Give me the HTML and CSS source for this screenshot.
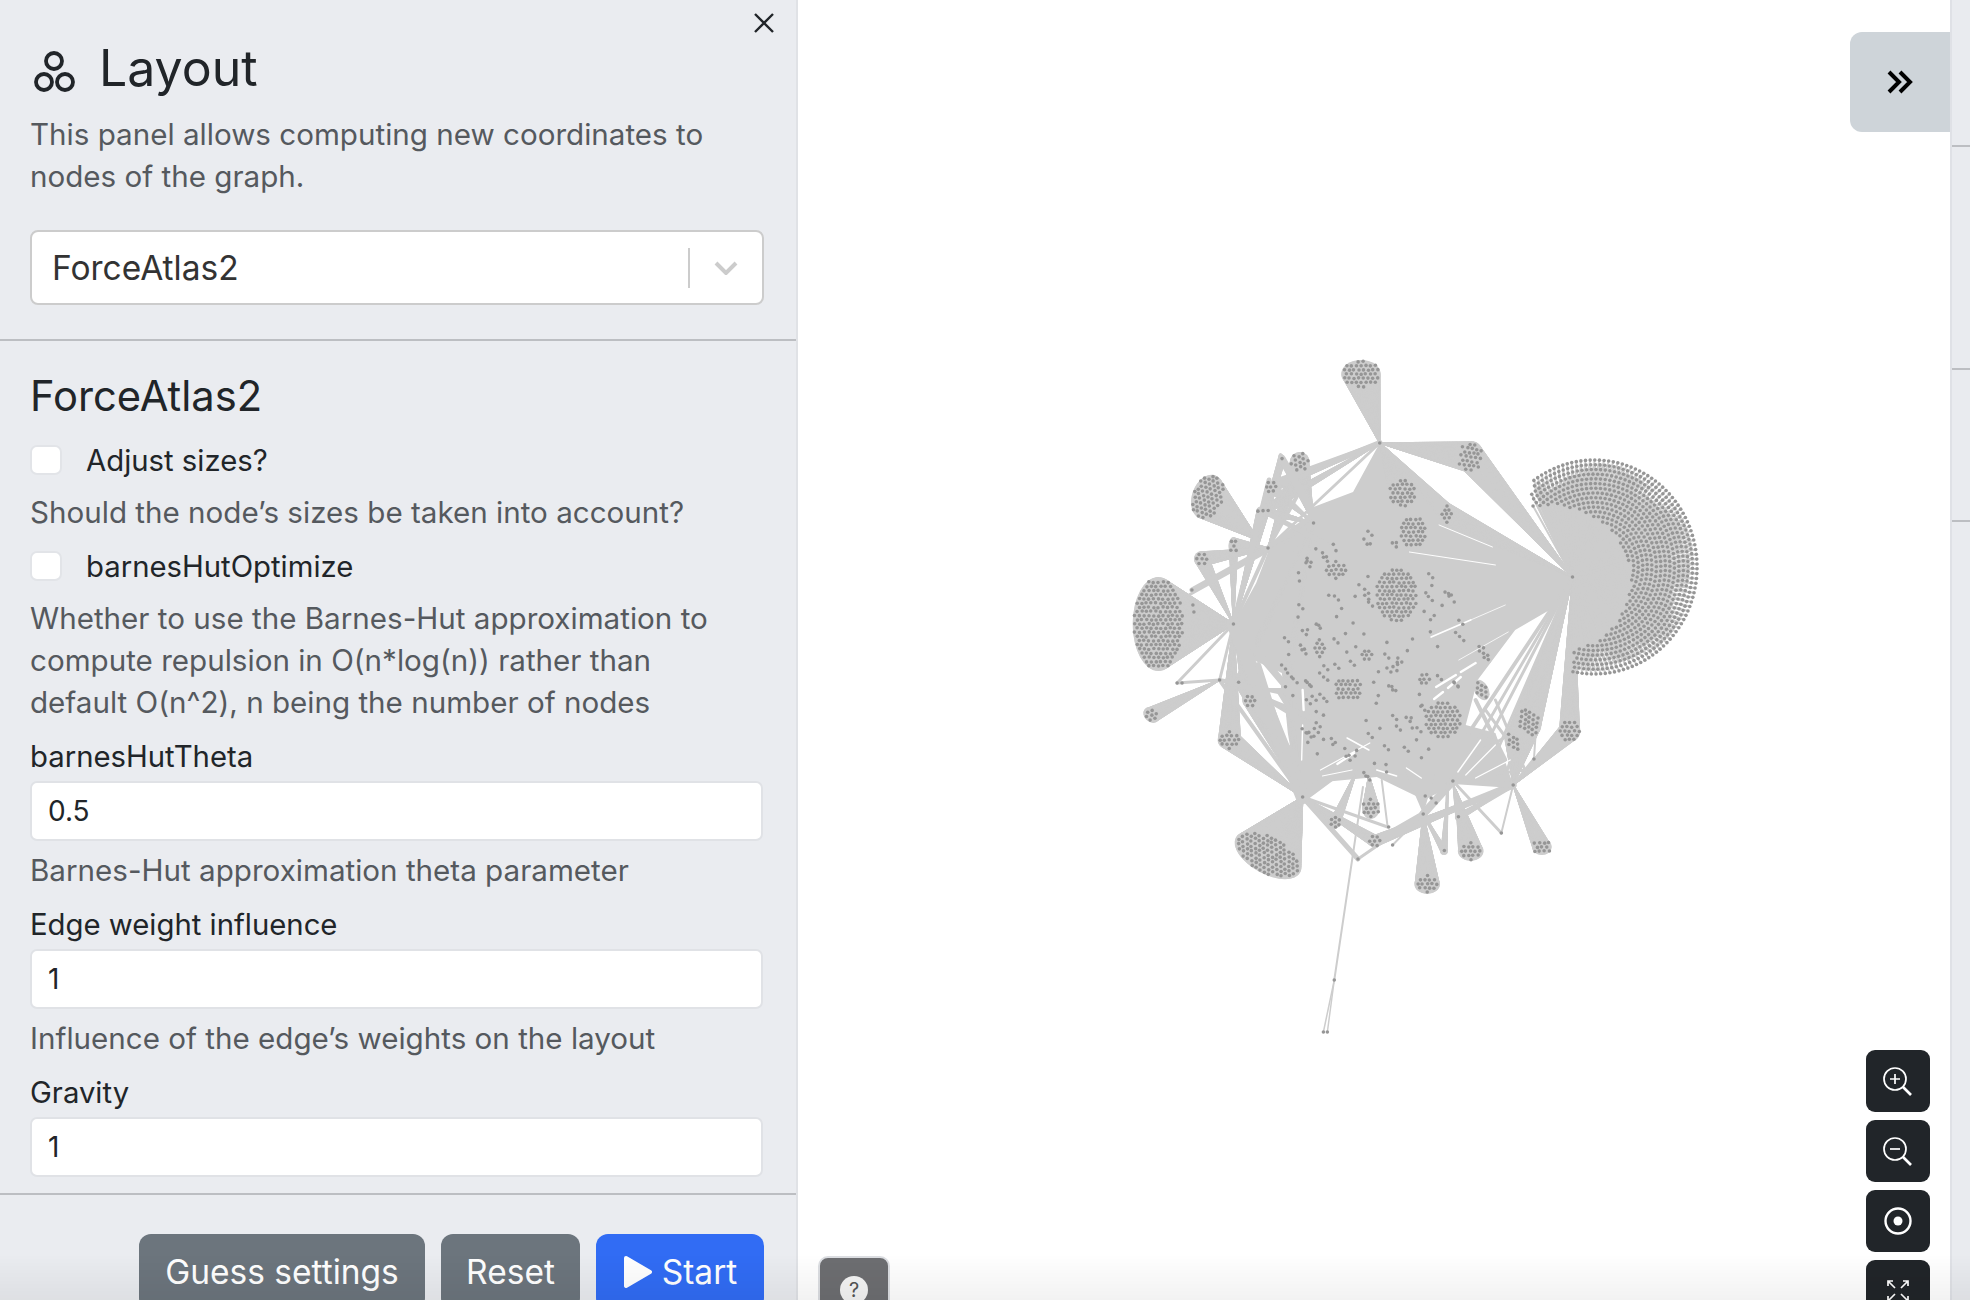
FILE: index.html
```html
<!DOCTYPE html>
<html lang="en">
<head>
  <meta charset="UTF-8" />
  <title>Layout</title>
  <link rel="stylesheet" href="styles.css">
</head>
<body>
  <aside class="panel">
    <button class="close-btn" aria-label="Close">
      <svg width="22" height="20" viewBox="0 0 22 20"><path d="M2 1 20 19M20 1 2 19" /></svg>
    </button>
    <header class="panel-head">
      <h1 class="title">
        <svg class="title-icon" width="42" height="42" viewBox="0 0 42 42">
          <circle cx="21" cy="10" r="8" /><circle cx="11" cy="31" r="8" /><circle cx="32" cy="31" r="8" />
        </svg>
        Layout
      </h1>
      <p class="desc">This panel allows computing new coordinates to nodes of the graph.</p>
      <div class="select">
        <span class="select-value">ForceAtlas2</span>
        <span class="select-sep"></span>
        <svg class="select-arrow" width="24" height="14" viewBox="0 0 24 14"><path d="M2 2 12 12 22 2" /></svg>
      </div>
    </header>

    <section class="panel-body">
      <h2 class="subtitle">ForceAtlas2</h2>

      <label class="check check-first"><span class="check-box"></span>Adjust sizes?</label>
      <p class="desc desc-check">Should the node’s sizes be taken into account?</p>

      <label class="check"><span class="check-box"></span>barnesHutOptimize</label>
      <p class="desc desc-check">Whether to use the Barnes-Hut approximation to compute repulsion in O(n*log(n)) rather than default O(n^2), n being the number of nodes</p>

      <div class="field">
        <label class="field-label">barnesHutTheta</label>
        <div class="input">0.5</div>
        <p class="desc">Barnes-Hut approximation theta parameter</p>
      </div>
      <div class="field">
        <label class="field-label">Edge weight influence</label>
        <div class="input">1</div>
        <p class="desc">Influence of the edge’s weights on the layout</p>
      </div>
      <div class="field">
        <label class="field-label">Gravity</label>
        <div class="input">1</div>
      </div>
    </section>

    <footer class="panel-foot">
      <button class="btn btn-grey btn-guess">Guess settings</button>
      <button class="btn btn-grey btn-reset">Reset</button>
      <button class="btn btn-blue btn-start">
        <svg width="30" height="36" viewBox="0 0 30 36"><path d="M3 4 27 18 3 32Z" /></svg>
        Start
      </button>
    </footer>
  </aside>

  <main class="map" id="map">
    <canvas id="graph"></canvas>

    <button class="expand-btn" aria-label="Expand">
      <svg width="28" height="24" viewBox="0 0 28 24"><path d="M3 2 13 12 3 22M14 2 24 12 14 22" /></svg>
    </button>

    <div class="zoom-controls">
      <button class="zoom-btn" aria-label="Zoom in">
        <svg width="32" height="32" viewBox="0 0 32 32"><circle cx="13" cy="14" r="11" /><path d="M8 14H18M13 9V19" /><path class="handle" d="M21 22 29 30" /></svg>
      </button>
      <button class="zoom-btn" aria-label="Zoom out">
        <svg width="32" height="32" viewBox="0 0 32 32"><circle cx="13" cy="14" r="11" /><path d="M8 14H18" /><path class="handle" d="M21 22 29 30" /></svg>
      </button>
      <button class="zoom-btn" aria-label="Reset zoom">
        <svg width="32" height="32" viewBox="0 0 32 32"><circle class="ring" cx="16" cy="16" r="12.5" /><circle class="dot" cx="16" cy="16" r="4.5" /></svg>
      </button>
      <button class="zoom-btn" aria-label="Fullscreen">
        <svg width="22" height="22" viewBox="0 0 22 22"><path d="M1 1 8 8M1 6V1H6M21 1 14 8M16 1H21V6M1 21 8 14M1 16V21H6M21 21 14 14M16 21H21V16" /></svg>
      </button>
    </div>

    <button class="help-btn" aria-label="Help"><span class="help-mark">?</span></button>
  </main>

  <aside class="side">
    <div class="side-row side-row-1"></div>
    <div class="side-row side-row-2"></div>
    <div class="side-row side-row-3"></div>
  </aside>

  <div class="bottom-shade"></div>

  <script src="graph.js"></script>
</body>
</html>
```

FILE: styles.css
```css
* { box-sizing: border-box; }

html, body {
  margin: 0;
  height: 100%;
  overflow: hidden;
}

body {
  display: flex;
  font-family: Inter, "Noto Sans", sans-serif;
  color: #212529;
  background: #fff;
}

button { font-family: inherit; border: 0; padding: 0; cursor: pointer; }
p { margin: 0; }

/* left panel */
.panel {
  position: relative;
  flex: 0 0 798px;
  height: 100vh;
  display: flex;
  flex-direction: column;
  overflow: hidden;
  background: #eaecf0;
  border-right: 2px solid #e0e2e6;
}

.close-btn {
  position: absolute;
  top: 13px;
  left: 753px;
  width: 22px;
  height: 20px;
  background: none;
}
.close-btn svg { display: block; fill: none; stroke: #212529; stroke-width: 2.4; }

.panel-head {
  flex: 0 0 341px;
  padding: 38px 32px 0 30px;
  border-bottom: 2px solid #bcbec2;
}

.title {
  display: flex;
  align-items: center;
  gap: 24px;
  height: 60px;
  margin: 0 0 15px;
  font-size: 50px;
  font-weight: 400;
}
.title-icon { margin: 8px 0 0 3px; fill: none; stroke: #212529; stroke-width: 3.8; }

.desc {
  max-width: 690px;
  font-size: 29.6px;
  line-height: 42px;
  color: #55595e;
}

.select {
  display: flex;
  align-items: center;
  height: 75px;
  margin-top: 33px;
  padding: 0 24px 0 20px;
  background: #fff;
  border: 2px solid #ccc;
  border-radius: 8px;
}
.select-value { flex: 1; font-size: 33.5px; color: #333; }
.select-sep { width: 2px; height: 40px; background: #ccc; margin-right: 24px; }
.select-arrow { fill: none; stroke: #ccc; stroke-width: 4; }

.panel-body {
  flex: 1;
  min-height: 0;
  padding: 31px 33px 0 30px;
  overflow: hidden;
}

.subtitle {
  margin: 0;
  font-size: 41.7px;
  line-height: 48px;
  font-weight: 400;
}

.check {
  display: flex;
  align-items: center;
  height: 30px;
  margin-top: 18px;
  font-size: 29.3px;
}
.check-first { margin-top: 25px; }
.check-box {
  flex: 0 0 32px;
  height: 30px;
  margin-right: 24px;
  background: #fff;
  border: 2px solid #e2e4e8;
  border-radius: 7px;
}
.desc-check { margin-top: 16px; }

.field { margin-top: 13px; }
.field-label {
  display: block;
  font-size: 29.3px;
  line-height: 42px;
}
.input {
  height: 60px;
  margin: 3px 0 8px;
  padding: 0 16px;
  font-size: 28px;
  line-height: 56px;
  background: #fff;
  border: 2px solid #e0e2e6;
  border-radius: 7px;
}

.panel-foot {
  flex: 0 0 107px;
  min-height: 0;
  display: flex;
  justify-content: flex-end;
  gap: 16px;
  padding: 39px 32px 0 0;
  border-top: 2px solid #bcbec2;
}

.btn {
  flex: none;
  height: 76px;
  font-size: 33.5px;
  color: #fff;
  border-radius: 12px;
}
.btn-grey { background: #6c757d; }
.btn-blue { background: #316cf4; }
.btn-guess { width: 286px; }
.btn-reset { width: 139px; }
.btn-start {
  width: 168px;
  display: flex;
  align-items: center;
  justify-content: center;
  gap: 9px;
}
.btn-start svg { fill: #fff; stroke: #fff; stroke-width: 4; stroke-linejoin: round; }

/* graph area */
.map {
  position: relative;
  flex: 1;
  height: 100vh;
  overflow: hidden;
  background: #fff;
}
#graph { display: block; }

.expand-btn {
  position: absolute;
  top: 32px;
  right: 0;
  width: 100px;
  height: 100px;
  background: #ced4d9;
  border-radius: 12px 0 0 12px;
}
.expand-btn svg { display: block; margin: 0 auto; fill: none; stroke: #000; stroke-width: 4; }

.zoom-controls {
  position: absolute;
  top: 1050px;
  right: 20px;
  display: flex;
  flex-direction: column;
  gap: 8px;
}
.zoom-btn {
  display: flex;
  align-items: center;
  justify-content: center;
  width: 64px;
  height: 62px;
  background: #212529;
  border-radius: 9px;
}
.zoom-btn svg { fill: none; stroke: #fff; stroke-width: 1.7; }
.zoom-btn .handle { stroke-width: 2.6; }
.zoom-btn .ring { stroke-width: 2.4; }
.zoom-btn .dot { fill: #fff; stroke: none; }

.help-btn {
  position: absolute;
  top: 1256px;
  left: 20px;
  display: flex;
  justify-content: center;
  align-items: flex-start;
  width: 72px;
  height: 70px;
  padding-top: 18px;
  background: #6d6e71;
  border: 2px solid #dcdee2;
  border-radius: 10px 10px 0 0;
}
.help-mark {
  width: 28px;
  height: 28px;
  font-size: 20px;
  line-height: 28px;
  color: #555;
  background: #f4f4f4;
  border-radius: 50%;
}

/* right panel, mostly hidden */
.side {
  flex: 0 0 20px;
  height: 100vh;
  background: #e9ebef;
  border-left: 2px solid #dfe1e6;
}
.side-row { border-bottom: 2px solid #bcbec2; }
.side-row-1 { height: 147px; }
.side-row-2 { height: 223px; }
.side-row-3 { height: 152px; }

.bottom-shade {
  position: fixed;
  left: 0;
  right: 0;
  bottom: 0;
  height: 46px;
  background: linear-gradient(rgba(0, 0, 0, 0), rgba(0, 0, 0, 0.05));
  pointer-events: none;
}
```

FILE: graph.js
```js
// draws the network on the canvas. All coordinates are page pixels.
const canvas = document.getElementById("graph");
const map = document.getElementById("map");
canvas.width = map.clientWidth;
canvas.height = map.clientHeight;

const ctx = canvas.getContext("2d");
ctx.translate(-map.offsetLeft, 0);
// the graph is a touch narrower than the coordinates below
ctx.translate(1100, 0);
ctx.scale(0.9885, 1);
ctx.translate(-1100, 0);

const EDGE = "#cdcdcd";
const NODE = "#969696";

let seed = 7;
function rand() {
  seed = (seed * 16807) % 2147483647;
  return (seed - 1) / 2147483646;
}

const A = [1383, 443], B = [1578, 577], C = [1235, 624], D = [1221, 680];
const E = [1270, 548], F = [1305, 797], G = [1518, 785], H = [1427, 814];
const I = [1457, 781], J = [1539, 759], K = [1316, 523], L = [1392, 827];
const M = [1506, 833];

// x, y, rx, ry, rotation (deg), hubs
const clusters = [
  [1364, 374, 19, 13, 0, [A]],
  [1475, 457, 12, 15, 10, [A, B]],
  [1159, 624, 25, 46, 0, [C]],
  [1209, 497, 15, 22, 20, [[1260, 540]]],
  [1152, 715, 8, 6, 40, [D]],
  [1203, 559, 7, 7, 0, [E, C]],
  [1235, 546, 4, 8, 0, [E, C]],
  [1302, 462, 9, 9, 20, [K, E]],
  [1284, 459, 2, 5, -20, [K, C]],
  [1273, 487, 5, 5, 0, [K, A, C]],
  [1265, 511, 6, 4, 0, [K, A, C]],
  [1406, 493, 13, 13, 0, [A]],
  [1451, 514, 5, 11, 0, [A, B]],
  [1417, 532, 13, 16, 0, []],
  [1400, 595, 21, 27, 0, []],
  [1339, 570, 10, 9, 0, []],
  [1322, 648, 7, 9, 0, []],
  [1351, 689, 14, 12, 0, []],
  [1447, 720, 18, 18, 0, []],
  [1486, 690, 6, 10, -30, []],
  [1488, 653, 4, 11, -35, []],
  [1428, 679, 6, 8, 0, []],
  [1370, 655, 5, 7, 0, []],
  [1534, 722, 11, 14, -25, [B, G]],
  [1575, 731, 10, 10, 0, [B, G]],
  [1518, 742, 7, 10, -30, [B, G]],
  [1231, 740, 11, 9, 0, [C, F]],
  [1252, 701, 7, 6, 0, [C, F]],
  [1240, 682, 4, 4, 0, [F, K]],
  [1288, 687, 4, 3, 0, [F, K]],
  [1270, 855, 36, 18, 28, [F]],
  [1374, 808, 8, 10, 0, [[1372, 775]]],
  [1431, 884, 12, 9, 0, [H]],
  [1475, 851, 12, 9, 0, [[1460, 790]]],
  [1547, 847, 9, 7, 0, [G]],
  [1378, 841, 7, 5, 0, [F, G]],
  [1338, 822, 5, 6, 30, [F, [1360, 770]]],
  [1448, 851, 3, 3, 0, [H, [1452, 790]]],
  [1463, 817, 3, 3, 0, [G, I]],
];

// single nodes
const singles = [
  A, B, C, D, E, F, G, H, I, J, K, L, M,
  [1361, 859], [1396, 845], [1337, 980], [1326, 1032], [1330, 1032],
  [1429, 796], [1435, 798], [1440, 803],
  [1178, 683], [1183, 683], [1193, 590], [1194, 605], [1195, 612],
];

// hub links, as from, to, width
const bands = [
  [C, D, 3], [C, F, 14], [D, F, 4], [C, [1300, 700], 7], [D, [1320, 700], 4],
  [[1178, 683], D, 3], [[1178, 683], C, 3], [C, E, 4], [C, K, 4], [C, [1271, 480], 5],
  [E, K, 4], [E, [1300, 495], 4], [E, [1330, 505], 5], [E, A, 3], [[1265, 511], [1330, 545], 5],
  [[1193, 590], E, 5], [[1190, 595], [1290, 540], 3], [[1273, 487], A, 6], [[1280, 480], [1383, 443], 4],
  [[1284, 459], [1320, 520], 8], [[1252, 701], [1300, 760], 6], [[1240, 682], [1330, 735], 5],
  [[1270, 700], [1320, 720], 5], [[1282, 693], [1330, 770], 5], [[1255, 690], [1340, 690], 4],
  [[1260, 665], [1300, 790], 6],
  [F, [1391, 827], 3], [F, [1361, 859], 5], [[1361, 859], H, 3], [[1396, 845], H, 2], [F, [1342, 770], 10],
  [[1378, 841], G, 7], [I, H, 8], [H, [1390, 835], 6], [H, [1448, 851], 4], [[1448, 851], [1452, 780], 3],
  [G, M, 2], [M, I, 3], [G, J, 3], [J, [1541, 730], 2], [G, [1463, 817], 5],
  [I, G, 6], [[1391, 827], [1385, 780], 2],
  [B, [1473, 733], 4], [B, [1482, 740], 3], [B, [1490, 745], 3], [B, [1500, 755], 3], [B, [1512, 770], 3],
  [[1480, 700], [1510, 760], 4], [[1490, 710], [1520, 750], 3], [[1500, 700], [1530, 770], 3],
  [[1470, 760], [1540, 720], 3], [[1490, 775], [1530, 770], 3],
  [[1366, 787], [1337, 980], 2], [[1337, 980], [1326, 1032], 1.5], [[1337, 980], [1330, 1032], 1.5],
];

const fills = [
  [
    A, [1404, 475], [1452, 503], B, [1560, 607], [1520, 630], [1482, 680], [1470, 725],
    [1500, 733], [1490, 767], [1457, 785], [1428, 800], [1380, 777], [1326, 782], F,
    [1298, 780], [1290, 733], [1284, 673], [1244, 655], C, [1258, 583], [1272, 547], [1300, 528],
    [1316, 507], [1356, 492],
  ],
  [H, [1408, 770], [1440, 770]],
  [[1500, 733], G, [1457, 781]],
  [F, [1298, 750], [1340, 770]],
];

// gaps left between edges inside the dense part
const slits = [
  [1510, 605, 1475, 620, 0.8], [1475, 620, 1435, 637, 1.8], [1500, 565, 1413, 552, 1], [1497, 547, 1443, 525, 1],
  [1513, 632, 1463, 660, 0.8], [1480, 663, 1465, 672, 2.4], [1460, 675, 1440, 687, 2.4],
  [1465, 677, 1452, 688, 2.4], [1447, 692, 1438, 699, 2.4], [1373, 743, 1323, 770, 1.2],
  [1357, 753, 1340, 764, 2.2], [1350, 738, 1372, 750, 1.6], [1305, 690, 1306, 710, 2.4], [1305, 725, 1304, 760, 1.4],
  [1380, 770, 1400, 776, 1.6], [1355, 770, 1325, 776, 1], [1410, 768, 1425, 778, 1.4],
  [1485, 740, 1462, 772, 1.4], [1500, 745, 1470, 775, 1.2], [1515, 760, 1480, 778, 1.4],
];

function line(a, b, width) {
  ctx.lineWidth = width;
  ctx.beginPath();
  ctx.moveTo(a[0], a[1]);
  ctx.lineTo(b[0], b[1]);
  ctx.stroke();
}

function fillShape(points) {
  ctx.beginPath();
  points.forEach((p, i) => (i ? ctx.lineTo(p[0], p[1]) : ctx.moveTo(p[0], p[1])));
  ctx.closePath();
  ctx.fill();
}

function ellipseNodes(cx, cy, rx, ry, deg) {
  const out = [];
  const step = 4.8;
  const rad = (deg * Math.PI) / 180;
  for (let row = -12; row <= 12; row++) {
    for (let col = -12; col <= 12; col++) {
      const u = (col + (row % 2 ? 0.5 : 0)) * step;
      const v = row * step * 0.87;
      if ((u * u) / (rx * rx) + (v * v) / (ry * ry) > 1) continue;
      out.push([
        cx + u * Math.cos(rad) - v * Math.sin(rad) + (rand() - 0.5) * 1,
        cy + u * Math.sin(rad) + v * Math.cos(rad) + (rand() - 0.5) * 1,
      ]);
    }
  }
  return out;
}

function crescentNodes() {
  const out = [];
  for (let s = 1; s > 0.3; s -= 0.044) {
    const rx = 104 * s, ry = 107 * s;
    const count = Math.floor((2 * Math.PI * rx) / 4.7);
    for (let i = 0; i < count; i++) {
      const t = (i / count) * 2 * Math.PI + s * 3;
      const x = 1600 + rx * Math.cos(t), y = 567 + ry * Math.sin(t);
      const inner = ((x - 1555) / 82) ** 2 + ((y - 580) / 74) ** 2;
      if (inner < 1 || x < 1536 || (x < 1578 && y > 560)) continue;
      out.push([x, y]);
    }
  }
  return out;
}

function insideCluster(x, y) {
  return clusters.some(([cx, cy, rx, ry]) => ((x - cx) / (rx + 6)) ** 2 + ((y - cy) / (ry + 6)) ** 2 < 1);
}

// nodes scattered through the dense part
function scatterNodes() {
  const out = [];
  while (out.length < 190) {
    const x = 1375 + (rand() * 2 - 1) * 95;
    const y = 650 + (rand() * 2 - 1) * 128;
    if (((x - 1375) / 95) ** 2 + ((y - 650) / 128) ** 2 > 1 || insideCluster(x, y)) continue;
    out.push([x, y]);
    if (rand() > 0.6) out.push([x + 4, y + 4]);
  }
  return out;
}

const nodes = [...singles];
ctx.strokeStyle = EDGE;
ctx.fillStyle = EDGE;
ctx.lineCap = "round";

fills.forEach(fillShape);

clusters.forEach(([x, y, rx, ry, deg, hubs]) => {
  const rad = (deg * Math.PI) / 180;
  ctx.beginPath();
  ctx.ellipse(x, y, rx + 1, ry + 1, rad, 0, Math.PI * 2);
  ctx.fill();

  // solid wedge from each hub to the rim of the cluster
  const steps = Math.ceil((2 * Math.PI * Math.max(rx, ry)) / 1.2);
  hubs.forEach((h) => {
    for (let i = 0; i < steps; i++) {
      const t = (i / steps) * 2 * Math.PI;
      const px = rx * Math.cos(t), py = ry * Math.sin(t);
      line(h, [x + px * Math.cos(rad) - py * Math.sin(rad), y + px * Math.sin(rad) + py * Math.cos(rad)], 1.4);
    }
  });
  nodes.push(...ellipseNodes(x, y, rx, ry, deg));
});

crescentNodes().forEach((n) => {
  nodes.push(n);
  line(B, n, 2);
});

bands.forEach(([a, b, w]) => line(a, b, w));

ctx.strokeStyle = "#fff";
slits.forEach(([x1, y1, x2, y2, w]) => line([x1, y1], [x2, y2], w));

nodes.push(...scatterNodes());
ctx.fillStyle = NODE;
nodes.forEach(([x, y]) => {
  ctx.beginPath();
  ctx.arc(x, y, 1.8, 0, Math.PI * 2);
  ctx.fill();
});
```
